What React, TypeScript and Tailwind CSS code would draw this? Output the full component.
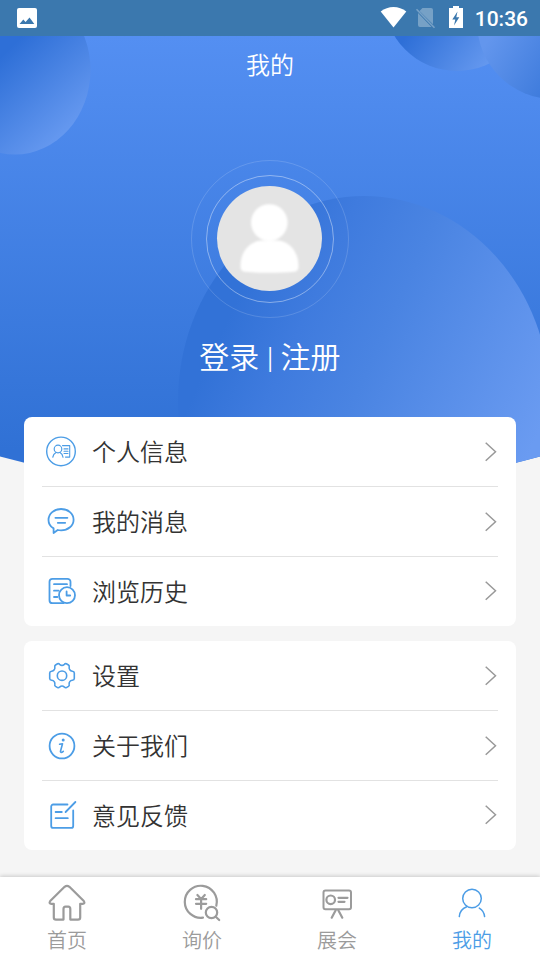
import React from 'react';

type IconProps = { children: React.ReactNode };

const RowIcon: React.FC<IconProps> = ({ children }) => (
  <svg
    width="36"
    height="35"
    viewBox="0 0 36 35"
    fill="none"
    stroke="#4c9de6"
    strokeWidth="1.8"
    strokeLinecap="round"
    strokeLinejoin="round"
  >
    {children}
  </svg>
);

const TabIcon: React.FC<IconProps> = ({ children }) => (
  <svg
    width="41"
    height="41"
    viewBox="0 0 41 41"
    fill="none"
    stroke="currentColor"
    strokeWidth="2.2"
    strokeLinecap="round"
    strokeLinejoin="round"
  >
    {children}
  </svg>
);

const accountItems = [
  {
    label: '个人信息',
    icon: (
      <RowIcon>
        <circle cx="17" cy="17.4" r="14.3" strokeWidth="1.4" />
        <g strokeWidth="1.2">
          <circle cx="14" cy="15" r="3.8" />
          <path d="M8.8 23.2c.4-2.6 1.6-3.9 3.2-4.7M16 18.5c1.6.8 2.7 2.1 3 4.7" />
          <path d="M18.5 11.6h7.2v11.5h-4.2M20 14.9h4M20 17.2h4M20 19.5h4" strokeWidth="1.1" />
        </g>
      </RowIcon>
    ),
  },
  {
    label: '我的消息',
    icon: (
      <RowIcon>
        <path d="M9.6 29v-4.6C6.3 22.6 4.5 19.6 4.5 16 4.5 9.700 10.100 5 17.100 5s12.500 4.700 12.500 10.700-5.500 10.700-12.500 10.700c-1.200 0-2.300-.1-3.400-.4z" />
        <path d="M11.4 13.8h12M13.8 18.8h7.4" />
      </RowIcon>
    ),
  },
  {
    label: '浏览历史',
    icon: (
      <RowIcon>
        <path d="M26.5 12V7.800a3 3 0 0 0-3-3H8.500a3 3 0 0 0-3 3v18.400a3 3 0 0 0 3 3h11" />
        <path d="M10 10.200h13M10 16.700h4.600M10 23h3.400" />
        <circle cx="23" cy="21.200" r="8" />
        <path d="M22.600 17.500v4h3.600" />
      </RowIcon>
    ),
  },
];

const appItems = [
  {
    label: '设置',
    icon: (
      <RowIcon>
        <circle cx="18" cy="17.7" r="4.7" strokeWidth="1.6" />
        <path
          strokeWidth="1.6"
          d="M13.600 5.800c.8-.4 1.500-.1 2 .5 1.400 1.300 3.400 1.300 4.800 0 .5-.6 1.200-.9 2-.5l2.100 1.200c.7.500.9 1.200.7 2-.4 2.100.9 3.900 3.100 4.200 1.400.2 2 .8 2 1.800v5.400c0 1-.6 1.600-2 1.800-2.200.3-3.500 2.100-3.100 4.200.2.800 0 1.500-.7 2l-2.100 1.200c-.8.4-1.500.1-2-.5-1.400-1.300-3.400-1.300-4.800 0-.5.6-1.200.9-2 .5l-2.100-1.200c-.7-.5-.9-1.200-.7-2 .4-2.100-.9-3.900-3.100-4.200-1.400-.2-2-.8-2-1.800V15c0-1 .6-1.600 2-1.800 2.200-.3 3.500-2.100 3.100-4.200-.2-.8 0-1.500.7-2z"
        />
      </RowIcon>
    ),
  },
  {
    label: '关于我们',
    icon: (
      <RowIcon>
        <circle cx="18" cy="18" r="12.4" />
        <circle cx="19.2" cy="12.1" r="1.5" fill="#4c9de6" stroke="none" />
        <path d="M15.600 16.300l2.900-.6-2 7.500c-.3 1.300.9 1.700 2.800.1" strokeWidth="1.600" />
      </RowIcon>
    ),
  },
  {
    label: '意见反馈',
    icon: (
      <RowIcon>
        <path d="M23.500 6.500H9.200a2 2 0 0 0-2 2v19.400a2 2 0 0 0 2 2h18a2 2 0 0 0 2-2V12.500" />
        <path d="M21.600 14L31.400 4M11.600 14h6.200M11.600 20.200h12.200" />
      </RowIcon>
    ),
  },
];

const tabs = [
  {
    label: '首页',
    icon: (
      <TabIcon>
        <path d="M17.600 4.800L3.200 19Q1.500 21.500 4.500 21.800H6.800V35.500Q6.800 37.600 9 37.600H16.500V27Q16.500 24.600 18.500 24.600H21.300Q23.300 24.600 23.300 27V37.600H31Q33.200 37.600 33.200 35.500V21.800H35.500Q38.500 21.500 36.800 19L22.400 4.800Q20 2.800 17.600 4.800Z" />
      </TabIcon>
    ),
  },
  {
    label: '询价',
    icon: (
      <TabIcon>
        <path d="M21 35.600A16 16 0 1 1 34.300 23.700" />
        <path d="M15.400 13l3.700 3.900 3.700-3.900M14 17.200h10.200M14 21.800h10.200M19.100 17.200v9.600" />
        <circle cx="29.500" cy="30.500" r="5.700" />
        <path d="M34 35l3.200 3" />
      </TabIcon>
    ),
  },
  {
    label: '展会',
    icon: (
      <TabIcon>
        <rect x="6.500" y="8.500" width="27.500" height="18.700" rx="2" strokeWidth="2" />
        <circle cx="13.700" cy="17.800" r="4.300" />
        <path d="M21.500 15.800h9M21.500 19.800h6M18.700 28.200l-4 7.500M21.300 28.200l4 7.500" />
      </TabIcon>
    ),
  },
  {
    label: '我的',
    active: true,
    icon: (
      <TabIcon>
        <g strokeWidth="1.5">
          <circle cx="20" cy="16.500" r="9.300" />
          <path d="M7.300 34.600c.3-4.400 3-8.200 7.400-9.900M27.300 26.100c3.100 1.900 5 5 5.300 8.500" />
        </g>
      </TabIcon>
    ),
  },
];

const HeaderArt = () => (
  <svg className="absolute left-0 top-0" width="540" height="500" viewBox="0 0 540 500">
    <defs>
      <linearGradient id="base" gradientUnits="userSpaceOnUse" x1="0" y1="36" x2="0" y2="450">
        <stop offset="0" stopColor="#548ff2" />
        <stop offset="1" stopColor="#3071d5" />
      </linearGradient>
      <linearGradient id="big" gradientUnits="userSpaceOnUse" x1="309" y1="139" x2="610" y2="275">
        <stop offset="0" stopColor="#3272d7" />
        <stop offset="0.21" stopColor="#3f7bde" />
        <stop offset="0.45" stopColor="#4a84e2" />
        <stop offset="1" stopColor="#6a9bf1" />
      </linearGradient>
      <linearGradient id="left" gradientUnits="userSpaceOnUse" x1="8" y1="50" x2="78" y2="124">
        <stop offset="0" stopColor="#2e6fd7" />
        <stop offset="1" stopColor="#6699f0" />
      </linearGradient>
      <linearGradient id="mid" gradientUnits="userSpaceOnUse" x1="412" y1="28" x2="480" y2="78">
        <stop offset="0" stopColor="#2e6fd7" />
        <stop offset="1" stopColor="#6699ef" />
      </linearGradient>
      <linearGradient id="right" gradientUnits="userSpaceOnUse" x1="485" y1="45" x2="550" y2="85">
        <stop offset="0" stopColor="#6396ed" />
        <stop offset="1" stopColor="#3e7bdc" />
      </linearGradient>
      <clipPath id="shape">
        <path d="M0 0H540V456.500Q270 530 0 456.500Z" />
      </clipPath>
    </defs>
    <g clipPath="url(#shape)">
      <rect width="540" height="500" fill="url(#base)" />
      <ellipse cx="15" cy="70" rx="75.500" ry="84.500" fill="url(#left)" />
      <circle cx="457" cy="-2.300" r="73.300" fill="url(#mid)" />
      <circle cx="554" cy="22" r="77" fill="url(#right)" />
      <ellipse cx="364" cy="401" rx="186" ry="205" fill="url(#big)" />
    </g>
  </svg>
);

const StatusBar = () => (
  <div className="relative flex h-9 items-center justify-between bg-[#3b78ae] pl-[17px] pr-3">
    <svg width="20" height="20" viewBox="0 0 20 20">
      <rect width="20" height="20" rx="2" fill="#fff" />
      <path d="M2.500 16l3.800-4.500 2.300 2.600 3.900-4.500 4.800 6.400z" fill="#3b78ae" />
    </svg>
    <div className="flex items-center">
      <svg width="84" height="24" viewBox="380 6 84 24" fill="#fff">
        <path d="M380.700 11.600C388 5.500 399 5.500 406.300 11.600L393.500 27.500z" />
        <g opacity="0.3">
          <path d="M422.500 8H431a2 2 0 0 1 2 2v14.300L419.500 11zM418 13L431.500 27H420a2 2 0 0 1-2-2z" />
          <path d="M416.500 9.300L434.500 27.800" stroke="#fff" strokeWidth="1.600" />
        </g>
        <path d="M449 8h4V6h6v2h4v20h-14z" />
        <path d="M457.500 11.500l-5.200 8h3l-1.300 6 5.300-8.300h-3z" fill="#3b78ae" />
      </svg>
      <span className="ml-[11px] pt-[2px] font-['Roboto'] text-[21px] leading-6 font-medium text-white">10:36</span>
    </div>
  </div>
);

const Avatar = () => (
  <svg width="160" height="160" viewBox="0 0 160 160" fill="none">
    <defs>
      <filter id="soft">
        <feGaussianBlur stdDeviation="1.3" />
      </filter>
    </defs>
    <circle cx="80" cy="80" r="78.500" stroke="#fff" strokeOpacity="0.15" />
    <circle cx="80" cy="80" r="63.500" stroke="#fff" strokeOpacity="0.4" />
    <circle cx="79.500" cy="79.500" r="52.500" fill="#e4e4e4" />
    <g fill="#fff" filter="url(#soft)">
      <circle cx="79.300" cy="63.500" r="18.300" />
      <path d="M50.500 108c-.5-16 10-26.500 22-26.500h14c12 0 22.500 10.500 22 26.500 0 3-2 4.500-4 4.800-16 1.300-34 1.300-50 0-2-.3-4-1.800-4-4.800z" />
    </g>
  </svg>
);

type Item = { label: string; icon: React.ReactNode };

const MenuCard: React.FC<{ items: Item[] }> = ({ items }) => (
  <div className="mx-6 rounded-lg bg-white px-[18px]">
    {items.map(item => (
      <div
        key={item.label}
        className="group flex h-[70px] items-center border-b border-[#e2e2e2] pl-[2px] last:h-[69px] last:border-b-0"
      >
        {item.icon}
        <span className="ml-3 pt-[2px] text-2xl text-[#333]">{item.label}</span>
        <svg className="ml-auto group-last:mb-[2px]" width="14" height="21" viewBox="0 0 14 21" fill="none">
          <path d="M1.700 1.700l9.800 9-9.800 9" stroke="#999" strokeWidth="1.500" />
        </svg>
      </div>
    ))}
  </div>
);

export default function App() {
  return (
    <div className="relative flex h-[960px] w-[540px] flex-col overflow-hidden bg-[#f5f5f5] font-['Roboto','Noto_Sans_CJK_SC',sans-serif] font-[350]">
      <HeaderArt />
      <StatusBar />
      <div className="relative flex flex-1 flex-col">
        <h1 className="h-[58px] text-center text-2xl leading-[61px] font-[350] text-white">我的</h1>
        <div className="mt-[65px] flex justify-center">
          <Avatar />
        </div>
        <div className="mt-[19px] h-[39px] text-center text-[30px] leading-10 text-white">登录 | 注册</div>
        <div className="mt-10 flex flex-col gap-[15px]">
          <MenuCard items={accountItems} />
          <MenuCard items={appItems} />
        </div>
      </div>
      <nav className="relative grid h-[83px] grid-cols-4 bg-white shadow-[0_-1px_4px_rgba(0,0,0,0.18)]">
        {tabs.map(tab => (
          <div
            key={tab.label}
            className={`flex flex-col items-center pt-[5px] ${tab.active ? 'text-[#4c9de6]' : 'text-[#9b9b9b]'}`}
          >
            {tab.icon}
            <span className="mt-1 mr-px text-xl leading-7">{tab.label}</span>
          </div>
        ))}
      </nav>
    </div>
  );
}
